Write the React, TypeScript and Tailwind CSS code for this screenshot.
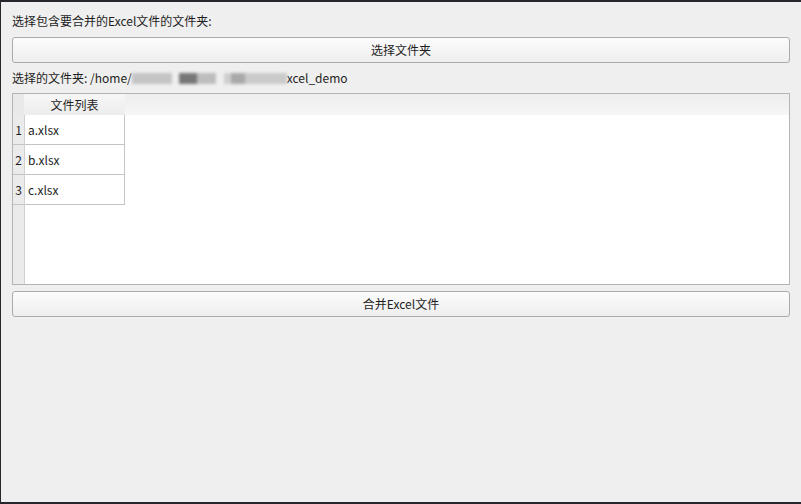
const font = { fontFamily: '"Noto Sans CJK SC", "Noto Sans", sans-serif' };

function PushButton({ label }: { label: string }) {
  return (
    <button
      type="button"
      className="flex h-[26px] w-full items-center justify-center rounded-[3px] border border-[#ababab] bg-gradient-to-b from-[#fcfcfc] to-[#eeeeee] text-[12px] leading-4 text-[#1e1e1e]"
    >
      {label}
    </button>
  );
}

const files = ['a.xlsx', 'b.xlsx', 'c.xlsx'];

export default function App() {
  return (
    <div
      className="flex h-[504px] w-[801px] flex-col border-t-2 border-b-2 border-l border-[#26262c] bg-[#efefef] px-[11px] pt-[11px] text-[12px] leading-4 text-[#1e1e1e]"
      style={font}
    >
      <p>选择包含要合并的Excel文件的文件夹:</p>

      <div className="mt-2">
        <PushButton label="选择文件夹" />
      </div>

      <p className="mt-[7px] flex items-center">
        <span>选择的文件夹: /home/</span>
        <span className="flex h-3 items-center blur-[1.5px]">
          <span className="h-[11px] w-[40px] bg-[#c4c4c4]" />
          <span className="ml-[7px] h-[11px] w-[18px] bg-[#777777]" />
          <span className="h-[11px] w-[19px] bg-[#bdbdbd]" />
          <span className="ml-[8px] h-[11px] w-[7px] bg-[#cfcfcf]" />
          <span className="h-[11px] w-[14px] bg-[#a9a9a9]" />
          <span className="h-[11px] w-[42px] bg-[#cacaca]" />
        </span>
        <span>xcel_demo</span>
      </p>

      <div className="mt-[7px] flex h-[192px] flex-col border border-[#b4b4b4] bg-white">
        <div className="flex h-[21px] bg-gradient-to-b from-[#f0f0f0] to-[#ebebeb]">
          <div className="w-[11px] bg-[#e9e9e9]" />
          <div className="flex w-[101px] items-center justify-center bg-gradient-to-b from-[#f7f7f7] to-[#ececec]">
            文件列表
          </div>
          <div className="flex-1 bg-gradient-to-b from-[#eeeeee] to-[#f6f6f6]" />
        </div>
        <div className="flex flex-1">
          <div className="flex w-[11px] flex-col bg-[#ebebeb]">
            {files.map((_, i) => (
              <div
                key={i}
                className="flex h-[30px] items-center justify-center border-b border-[#c4c4c4] text-[12px]"
              >
                {i + 1}
              </div>
            ))}
          </div>
          <div className="flex w-[101px] flex-col border-l border-[#d0d0d0]">
            {files.map((f) => (
              <div
                key={f}
                className="flex h-[30px] items-center border-r border-b border-[#c4c4c4] pl-[3px]"
              >
                {f}
              </div>
            ))}
          </div>
          <div className="flex-1" />
        </div>
      </div>

      <div className="mt-[6px]">
        <PushButton label="合并Excel文件" />
      </div>
    </div>
  );
}
